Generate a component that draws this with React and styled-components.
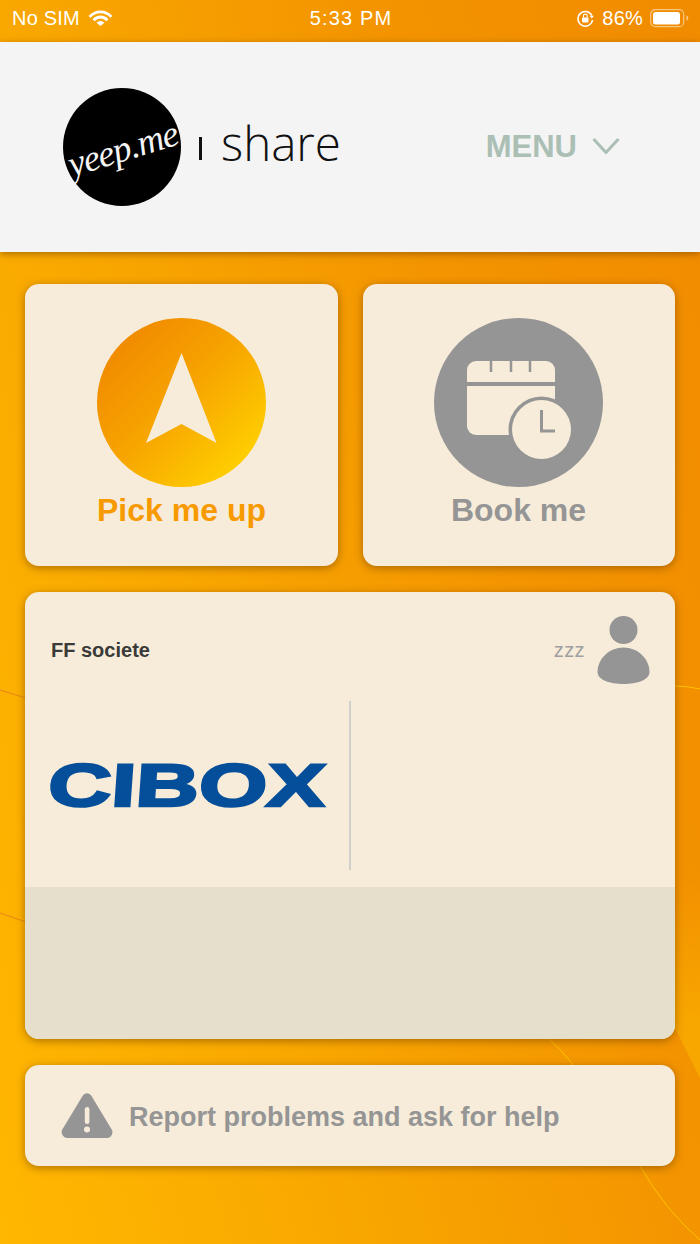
import React from "react";
import styled, { createGlobalStyle } from "styled-components";

const Global = createGlobalStyle`
  html, body { margin: 0; padding: 0; }
  body { font-family: "Liberation Sans", Arial, sans-serif; }
`;

const Page = styled.div`
  position: relative;
  width: 700px;
  height: 1244px;
  overflow: hidden;
  display: flex;
  flex-direction: column;
  background: linear-gradient(75deg, #ffb700 0%, #f9a800 32%, #f39400 68%, #f18b00 100%);
`;

const Decor = styled.svg`
  position: absolute;
  inset: 0;
  width: 700px;
  height: 1244px;
`;

const StatusBar = styled.div`
  position: relative;
  height: 42px;
  flex: none;
  padding: 0 10px 6px 12px;
  box-sizing: border-box;
  display: grid;
  grid-template-columns: 1fr auto 1fr;
  align-items: center;
  color: #fff;
  font-size: 20px;
  letter-spacing: 0.2px;
`;

const StatusTime = styled.span`
  letter-spacing: 1.15px;
`;

const StatusGroup = styled.div`
  display: flex;
  align-items: center;
  gap: ${(p) => p.$gap || 8}px;
  justify-content: ${(p) => (p.$end ? "flex-end" : "flex-start")};
`;

const Header = styled.header`
  position: relative;
  height: 210px;
  flex: none;
  background: #f4f4f4;
  box-shadow: 0 2px 7px rgba(120, 70, 0, 0.6);
  display: flex;
  align-items: center;
  padding: 0 80px 0 63px;
  box-sizing: border-box;
`;

const LogoCircle = styled.div`
  width: 118px;
  height: 118px;
  border-radius: 50%;
  background: #000;
  flex: none;
  display: flex;
  align-items: center;
  justify-content: center;
`;

const LogoText = styled.span`
  display: block;
  font-family: "Liberation Serif", serif;
  font-style: italic;
  color: #f4f4f4;
  font-size: 37px;
  letter-spacing: -1px;
  white-space: nowrap;
  transform: translate(1px, 1px) rotate(-17deg);
`;

const Tagline = styled.div`
  margin-left: 18px;
  font-family: "Open Sans", sans-serif;
  font-weight: 300;
  font-size: 47.5px;
  line-height: 1;
  color: #111;
  display: flex;
  align-items: center;
  gap: 19px;
  margin-top: -9px;
`;

const TagBar = styled.span`
  width: 3px;
  height: 23px;
  background: #111;
  margin-top: 12px;
`;

const Menu = styled.div`
  margin-left: auto;
  display: flex;
  align-items: center;
  gap: 15px;
  color: #abbfb4;
  font-weight: 700;
  font-size: 31px;
`;

const MenuChevron = styled.svg`
  margin-top: -3px;
`;

const Main = styled.main`
  position: relative;
  padding: 32px 25px 0;
  display: flex;
  flex-direction: column;
  gap: 26px;
`;

const ActionRow = styled.div`
  display: grid;
  grid-template-columns: 313px 312px;
  gap: 25px;
`;

const Card = styled.div`
  background: #f7ecd9;
  border-radius: 14px;
  box-shadow: 0 2px 8px rgba(120, 70, 0, 0.6);
  overflow: hidden;
`;

const ActionCard = styled(Card)`
  height: 282px;
  display: flex;
  flex-direction: column;
  align-items: center;
  padding: 34px ${(p) => p.$nudge || 0}px 0 0;
  box-sizing: border-box;
`;

const ActionCircle = styled.div`
  width: 169px;
  height: 169px;
  border-radius: 50%;
  background: ${(p) => p.$bg};
  display: flex;
  align-items: center;
  justify-content: center;
`;

const ActionLabel = styled.div`
  margin-top: 6px;
  font-weight: 700;
  font-size: 32px;
  line-height: 34px;
  color: ${(p) => p.$color};
`;

const CompanyCard = styled(Card)`
  height: 447px;
  display: flex;
  flex-direction: column;
`;

const CompanyTop = styled.div`
  height: 295px;
  flex: none;
  display: flex;
  flex-direction: column;
  box-sizing: border-box;
`;

const CompanyHead = styled.div`
  height: 109px;
  flex: none;
  display: flex;
  align-items: center;
  justify-content: space-between;
  padding: 0 25px 0 26px;
  box-sizing: border-box;
`;

const CompanyName = styled.div`
  font-weight: 700;
  font-size: 20px;
  color: #3a3a38;
  margin-top: 7px;
`;

const Driver = styled.div`
  display: flex;
  align-items: center;
  gap: 12px;
  margin-top: 6px;
`;

const Zzz = styled.span`
  font-size: 20px;
  color: #a0a0a0;
  letter-spacing: 0.4px;
  margin-top: 2px;
`;

const CompanyBody = styled.div`
  display: flex;
  align-items: stretch;
  height: 169px;
`;

const LogoCell = styled.div`
  width: 324px;
  flex: none;
  display: flex;
  align-items: center;
  border-right: 2px solid #cfd0cb;
`;

const CiboxSvg = styled.svg`
  overflow: visible;
  display: block;
`;

const CompanyBottom = styled.div`
  flex: 1;
  background: #e6dfcc;
`;

const ReportCard = styled(Card)`
  height: 101px;
  display: flex;
  align-items: center;
  padding-left: 36px;
  gap: 16px;
  box-sizing: border-box;
`;

const ReportText = styled.div`
  font-weight: 700;
  font-size: 27px;
  color: #959595;
  margin-top: 3px;
`;

const Cibox = () => (
  <CiboxSvg width="324" height="60" viewBox="0 0 324 60" aria-label="CIBOX">
    <g transform="translate(22 50) skewX(-4)">
      <text
        x="0"
        y="0"
        textLength="277"
        lengthAdjust="spacingAndGlyphs"
        fontFamily="Liberation Sans, Arial, sans-serif"
        fontWeight="700"
        fontSize="60"
        fill="#044e9a"
        stroke="#044e9a"
        strokeWidth="2.5"
      >
        CIBOX
      </text>
    </g>
  </CiboxSvg>
);

export default function App() {
  return (
    <Page>
      <Global />
      <Decor viewBox="0 0 700 1244" fill="none">
        <defs>
          <linearGradient id="wedge" x1="0" y1="0" x2="0" y2="1">
            <stop offset="0" stopColor="#f7a400" stopOpacity="0" />
            <stop offset="0.7" stopColor="#f8a600" stopOpacity="1" />
          </linearGradient>
        </defs>
        <path d="M670 880 H700 V1078 L672 1022 Z" fill="url(#wedge)" />
        <path d="M0 690 L26 698" stroke="#e8841a" strokeWidth="1" />
        <path d="M0 913 L26 922" stroke="#e8841a" strokeWidth="1" />
        <path d="M674 686 Q688 686 700 689" stroke="#ffc400" strokeWidth="1" />
        <path d="M548 1038 Q562 1050 574 1066" stroke="#ffc400" strokeWidth="1" />
        <path d="M640 1166 Q665 1210 700 1240" stroke="#ffc400" strokeWidth="1" />
      </Decor>

      <StatusBar>
        <StatusGroup $gap={8}>
          <span>No SIM</span>
          <svg width="25" height="18" viewBox="0 0 26 19" fill="none">
            <path d="M1.500 8.400A15 15 0 0 1 24.500 8.400" stroke="#fff" strokeWidth="3" />
            <path d="M5.700 11.900A9.500 9.500 0 0 1 20.300 11.900" stroke="#fff" strokeWidth="3" />
            <path d="M13 18L8.800 14.500A5.500 5.500 0 0 1 17.200 14.500Z" fill="#fff" />
          </svg>
        </StatusGroup>
        <StatusTime>5:33 PM</StatusTime>
        <StatusGroup $end $gap={7}>
          <svg width="19" height="19" viewBox="0 0 19 19" fill="none">
            <path d="M15.800 6.500A7.300 7.300 0 1 0 16.500 11" stroke="#fff" strokeWidth="1.500" />
            <path d="M13.500 6.800h4.500l-2.200 2.600z" fill="#fff" />
            <rect x="6" y="8.500" width="6.500" height="5" rx="1" fill="#fff" />
            <path d="M7.400 8.500V7a1.900 1.900 0 0 1 3.800 0v1.500" stroke="#fff" strokeWidth="1.100" />
          </svg>
          <span>86%</span>
          <svg width="40" height="20" viewBox="0 0 40 20" fill="none">
            <rect x="0.700" y="1.700" width="33" height="17" rx="4.500" stroke="#fff" strokeOpacity="0.5" strokeWidth="1.200" />
            <rect x="3" y="4" width="27" height="12.500" rx="2.500" fill="#fff" />
            <path d="M36.500 7.500c1.200.4 1.800 1.400 1.800 2.600s-.6 2.200-1.800 2.600z" fill="#fff" fillOpacity="0.55" />
          </svg>
        </StatusGroup>
      </StatusBar>

      <Header>
        <LogoCircle>
          <LogoText>yeep.me</LogoText>
        </LogoCircle>
        <Tagline>
          <TagBar />
          <span>share</span>
        </Tagline>
        <Menu>
          <span>MENU</span>
          <MenuChevron width="28" height="16" viewBox="0 0 28 16" fill="none">
            <path d="M1.500 1 L14 14.500 L26.500 1" stroke="#abbfb4" strokeWidth="3" />
          </MenuChevron>
        </Menu>
      </Header>

      <Main>
        <ActionRow>
          <ActionCard>
            <ActionCircle $bg="linear-gradient(135deg, #f08a00 12%, #f7a400 48%, #ffd000 88%)">
              <svg width="169" height="169" viewBox="0 0 169 169">
                <path d="M84.500 35 L119.500 125 L84.500 106 L49 125 Z" fill="#f7ecd9" />
              </svg>
            </ActionCircle>
            <ActionLabel $color="#f79a00">Pick me up</ActionLabel>
          </ActionCard>
          <ActionCard $nudge={1}>
            <ActionCircle $bg="#959595">
              <svg width="169" height="169" viewBox="0 0 169 169">
                <path d="M33 64 V52 a9 9 0 0 1 9 -9 H112 a9 9 0 0 1 9 9 V64 Z" fill="#f7ecd9" />
                <path d="M33 68 H121 V108 a9 9 0 0 1 -9 9 H42 a9 9 0 0 1 -9 -9 Z" fill="#f7ecd9" />
                <path d="M57 43 V54 M77 43 V54 M96 43 V54" stroke="#959595" strokeWidth="2.500" />
                <circle cx="107.500" cy="111.500" r="33" fill="#959595" />
                <circle cx="107.500" cy="111.500" r="29.500" fill="#f7ecd9" />
                <path d="M107.500 92 V113 H121" stroke="#959595" strokeWidth="3" fill="none" />
              </svg>
            </ActionCircle>
            <ActionLabel $color="#959595">Book me</ActionLabel>
          </ActionCard>
        </ActionRow>

        <CompanyCard>
          <CompanyTop>
            <CompanyHead>
              <CompanyName>FF societe</CompanyName>
              <Driver>
                <Zzz>zzz</Zzz>
                <svg width="53" height="68" viewBox="0 0 53 68" fill="#959595">
                  <circle cx="26.500" cy="14" r="14" />
                  <path d="M26.500 31.500 C41 31.500 52.500 43 52.500 56 C52.500 64 40 68 26.500 68 C13 68 0.500 64 0.500 56 C0.500 43 12 31.500 26.500 31.500 Z" />
                </svg>
              </Driver>
            </CompanyHead>
            <CompanyBody>
              <LogoCell>
                <Cibox />
              </LogoCell>
            </CompanyBody>
          </CompanyTop>
          <CompanyBottom />
        </CompanyCard>

        <ReportCard>
          <svg width="52" height="46" viewBox="0 0 52 46">
            <path d="M21.500 3 a5 5 0 0 1 9 0 L51 37 a6 6 0 0 1 -4 8 a6 6 0 0 1 -1 0 H6 a6 6 0 0 1 -5 -8 Z" fill="#959595" />
            <rect x="23.800" y="14" width="4.600" height="17" rx="2.300" fill="#f7ecd9" />
            <circle cx="26" cy="36.500" r="3" fill="#f7ecd9" />
          </svg>
          <ReportText>Report problems and ask for help</ReportText>
        </ReportCard>
      </Main>
    </Page>
  );
}
